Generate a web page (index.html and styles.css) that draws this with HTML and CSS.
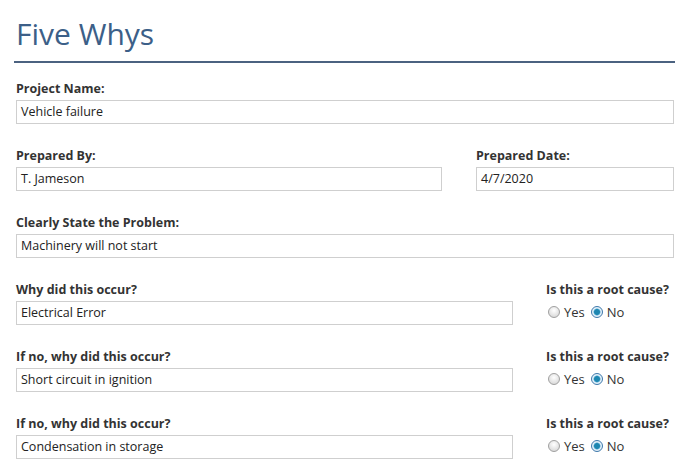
FILE: index.html
```html
<!DOCTYPE html>
<html>
<head>
<meta charset="utf-8">
<link rel="stylesheet" href="styles.css">
</head>
<body>
<div class="page">
  <h1 class="title">Five Whys</h1>
  <div class="rule"></div>

  <div class="field">
    <div class="label">Project Name:</div>
    <div class="input">Vehicle failure</div>
  </div>

  <div class="row two">
    <div class="field">
      <div class="label">Prepared By:</div>
      <div class="input">T. Jameson</div>
    </div>
    <div class="field">
      <div class="label">Prepared Date:</div>
      <div class="input">4/7/2020</div>
    </div>
  </div>

  <div class="field">
    <div class="label">Clearly State the Problem:</div>
    <div class="input">Machinery will not start</div>
  </div>

  <div class="row why">
    <div class="field">
      <div class="label">Why did this occur?</div>
      <div class="input">Electrical Error</div>
    </div>
    <div class="root">
      <div class="label">Is this a root cause?</div>
      <div class="radios">
        <span class="radio"></span><span class="opt">Yes</span>
        <span class="radio on"></span><span class="opt">No</span>
      </div>
    </div>
  </div>

  <div class="row why">
    <div class="field">
      <div class="label">If no, why did this occur?</div>
      <div class="input">Short circuit in ignition</div>
    </div>
    <div class="root">
      <div class="label">Is this a root cause?</div>
      <div class="radios">
        <span class="radio"></span><span class="opt">Yes</span>
        <span class="radio on"></span><span class="opt">No</span>
      </div>
    </div>
  </div>

  <div class="row why">
    <div class="field">
      <div class="label">If no, why did this occur?</div>
      <div class="input">Condensation in storage</div>
    </div>
    <div class="root">
      <div class="label">Is this a root cause?</div>
      <div class="radios">
        <span class="radio"></span><span class="opt">Yes</span>
        <span class="radio on"></span><span class="opt">No</span>
      </div>
    </div>
  </div>
</div>
</body>
</html>
```

FILE: styles.css
```css
html, body {
  margin: 0;
  padding: 0;
  background: #ffffff;
}
body {
  font-family: "Open Sans", "Noto Sans", sans-serif;
  color: #333333;
}
.page {
  padding: 14px 15px 0 16px;
}
.title {
  margin: 0;
  font-weight: 400;
  font-size: 30px;
  line-height: 40px;
  color: #3c5f88;
}
.rule {
  height: 2px;
  background: #4b6280;
  margin: 7px -1px 18px -2px;
}
.field {
  margin-bottom: 24px;
}
.label {
  font-size: 12.5px;
  font-weight: 700;
  line-height: 16px;
  color: #333333;
  margin-bottom: 3px;
}
.input {
  height: 22px;
  border: 1px solid #cfcfcf;
  font-size: 12.5px;
  line-height: 22px;
  padding-left: 4px;
  color: #222222;
}
.row {
  display: grid;
}
.two {
  grid-template-columns: 1fr 198px;
  column-gap: 34px;
}
.why {
  grid-template-columns: 497px 1fr;
  column-gap: 33px;
}
.root .label {
  margin-bottom: 5px;
}
.radios {
  display: flex;
  align-items: center;
  font-size: 13px;
  line-height: 18px;
  padding-left: 2px;
  color: #333333;
}
.radio {
  width: 12px;
  height: 12px;
  border-radius: 50%;
  border: 1px solid #a0a0a0;
  background: radial-gradient(circle at 50% 35%, #ffffff 0%, #dcdcdc 75%);
  box-sizing: border-box;
  margin-right: 4px;
}
.radio.on {
  border-color: #3d78ab;
  background: radial-gradient(circle, #1d86b0 0 2.5px, #66b6dc 3.2px, #e6f1f9 3.9px);
}
.opt {
  margin-right: 6px;
}
```
